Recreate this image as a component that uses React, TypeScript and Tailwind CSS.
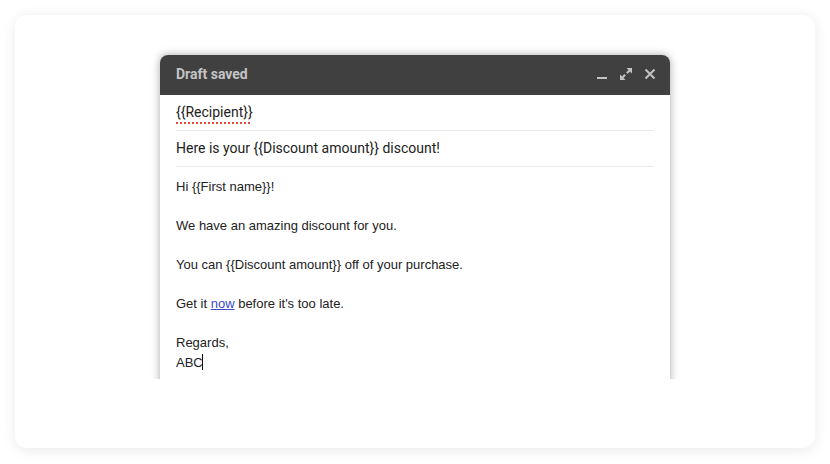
const bodyLines = [
  "Hi {{First name}}!",
  "",
  "We have an amazing discount for you.",
  "",
  "You can {{Discount amount}} off of your purchase.",
  "",
];

function HeaderIcons() {
  return (
    <div className="flex items-center gap-[11px] text-[#c2c2c2]">
      <svg width="12" height="14" viewBox="0 0 12 14" aria-hidden>
        <rect x="1" y="10" width="10" height="2" fill="currentColor" />
      </svg>
      <svg width="14" height="14" viewBox="0 0 14 14" aria-hidden>
        <path d="M7.5 1H13V6.5L11 4.5L8.6 6.9L7.1 5.4L9.5 3Z" fill="currentColor" />
        <path d="M6.5 13H1V7.5L3 9.5L5.4 7.1L6.9 8.6L4.5 11Z" fill="currentColor" />
      </svg>
      <svg width="12" height="12" viewBox="0 0 12 12" aria-hidden>
        <path d="M1.5 1.5L10.5 10.5M10.5 1.5L1.5 10.5" stroke="currentColor" strokeWidth="2" />
      </svg>
    </div>
  );
}

export default function App() {
  return (
    <div className="h-[464px] w-[830px] bg-white p-[15px]">
      <div className="flex h-[433px] justify-center rounded-xl bg-white shadow-[0_2px_14px_rgba(0,0,0,0.09)]">
        <div className="-mt-[24px] h-[388px] overflow-hidden px-[16px] pt-[64px]">
          <div className="h-[400px] w-[510px] rounded-t-lg bg-white shadow-[0_0_8px_rgba(0,0,0,0.35)]">
            <div className="flex h-10 items-center justify-between rounded-t-lg bg-[#404040] pb-[2px] pl-4 pr-[14px]">
              <span className="font-['Roboto',sans-serif] text-[14px] font-bold text-[#c4c4c4]">Draft saved</span>
              <HeaderIcons />
            </div>
            <div className="px-4 font-['Roboto',sans-serif] text-[14px] text-[#222]">
              <div className="flex h-[36px] items-center border-b border-[#ebebeb]">
                <span className="underline decoration-[#e8453c] decoration-dotted decoration-2 underline-offset-[5px]">
                  {"{{Recipient}}"}
                </span>
              </div>
              <div className="flex h-[36px] items-center border-b border-[#ebebeb]">
                {"Here is your {{Discount amount}} discount!"}
              </div>
            </div>
            <div className="px-4 pt-[10px] font-['Liberation_Sans',Arial,sans-serif] text-[13px] leading-[19.5px] text-[#222]">
              {bodyLines.map((line, i) => (
                <p key={i} className="h-[19.5px]">{line}</p>
              ))}
              <p>
                Get it <span className="text-[#3c4bd0] underline">now</span> before it's too late.
              </p>
              <p className="h-[19.5px]"></p>
              <p>Regards,</p>
              <p className="flex items-center">
                ABC<span className="-ml-px inline-block h-[16px] w-px bg-[#111]" />
              </p>
            </div>
          </div>
        </div>
      </div>
    </div>
  );
}
